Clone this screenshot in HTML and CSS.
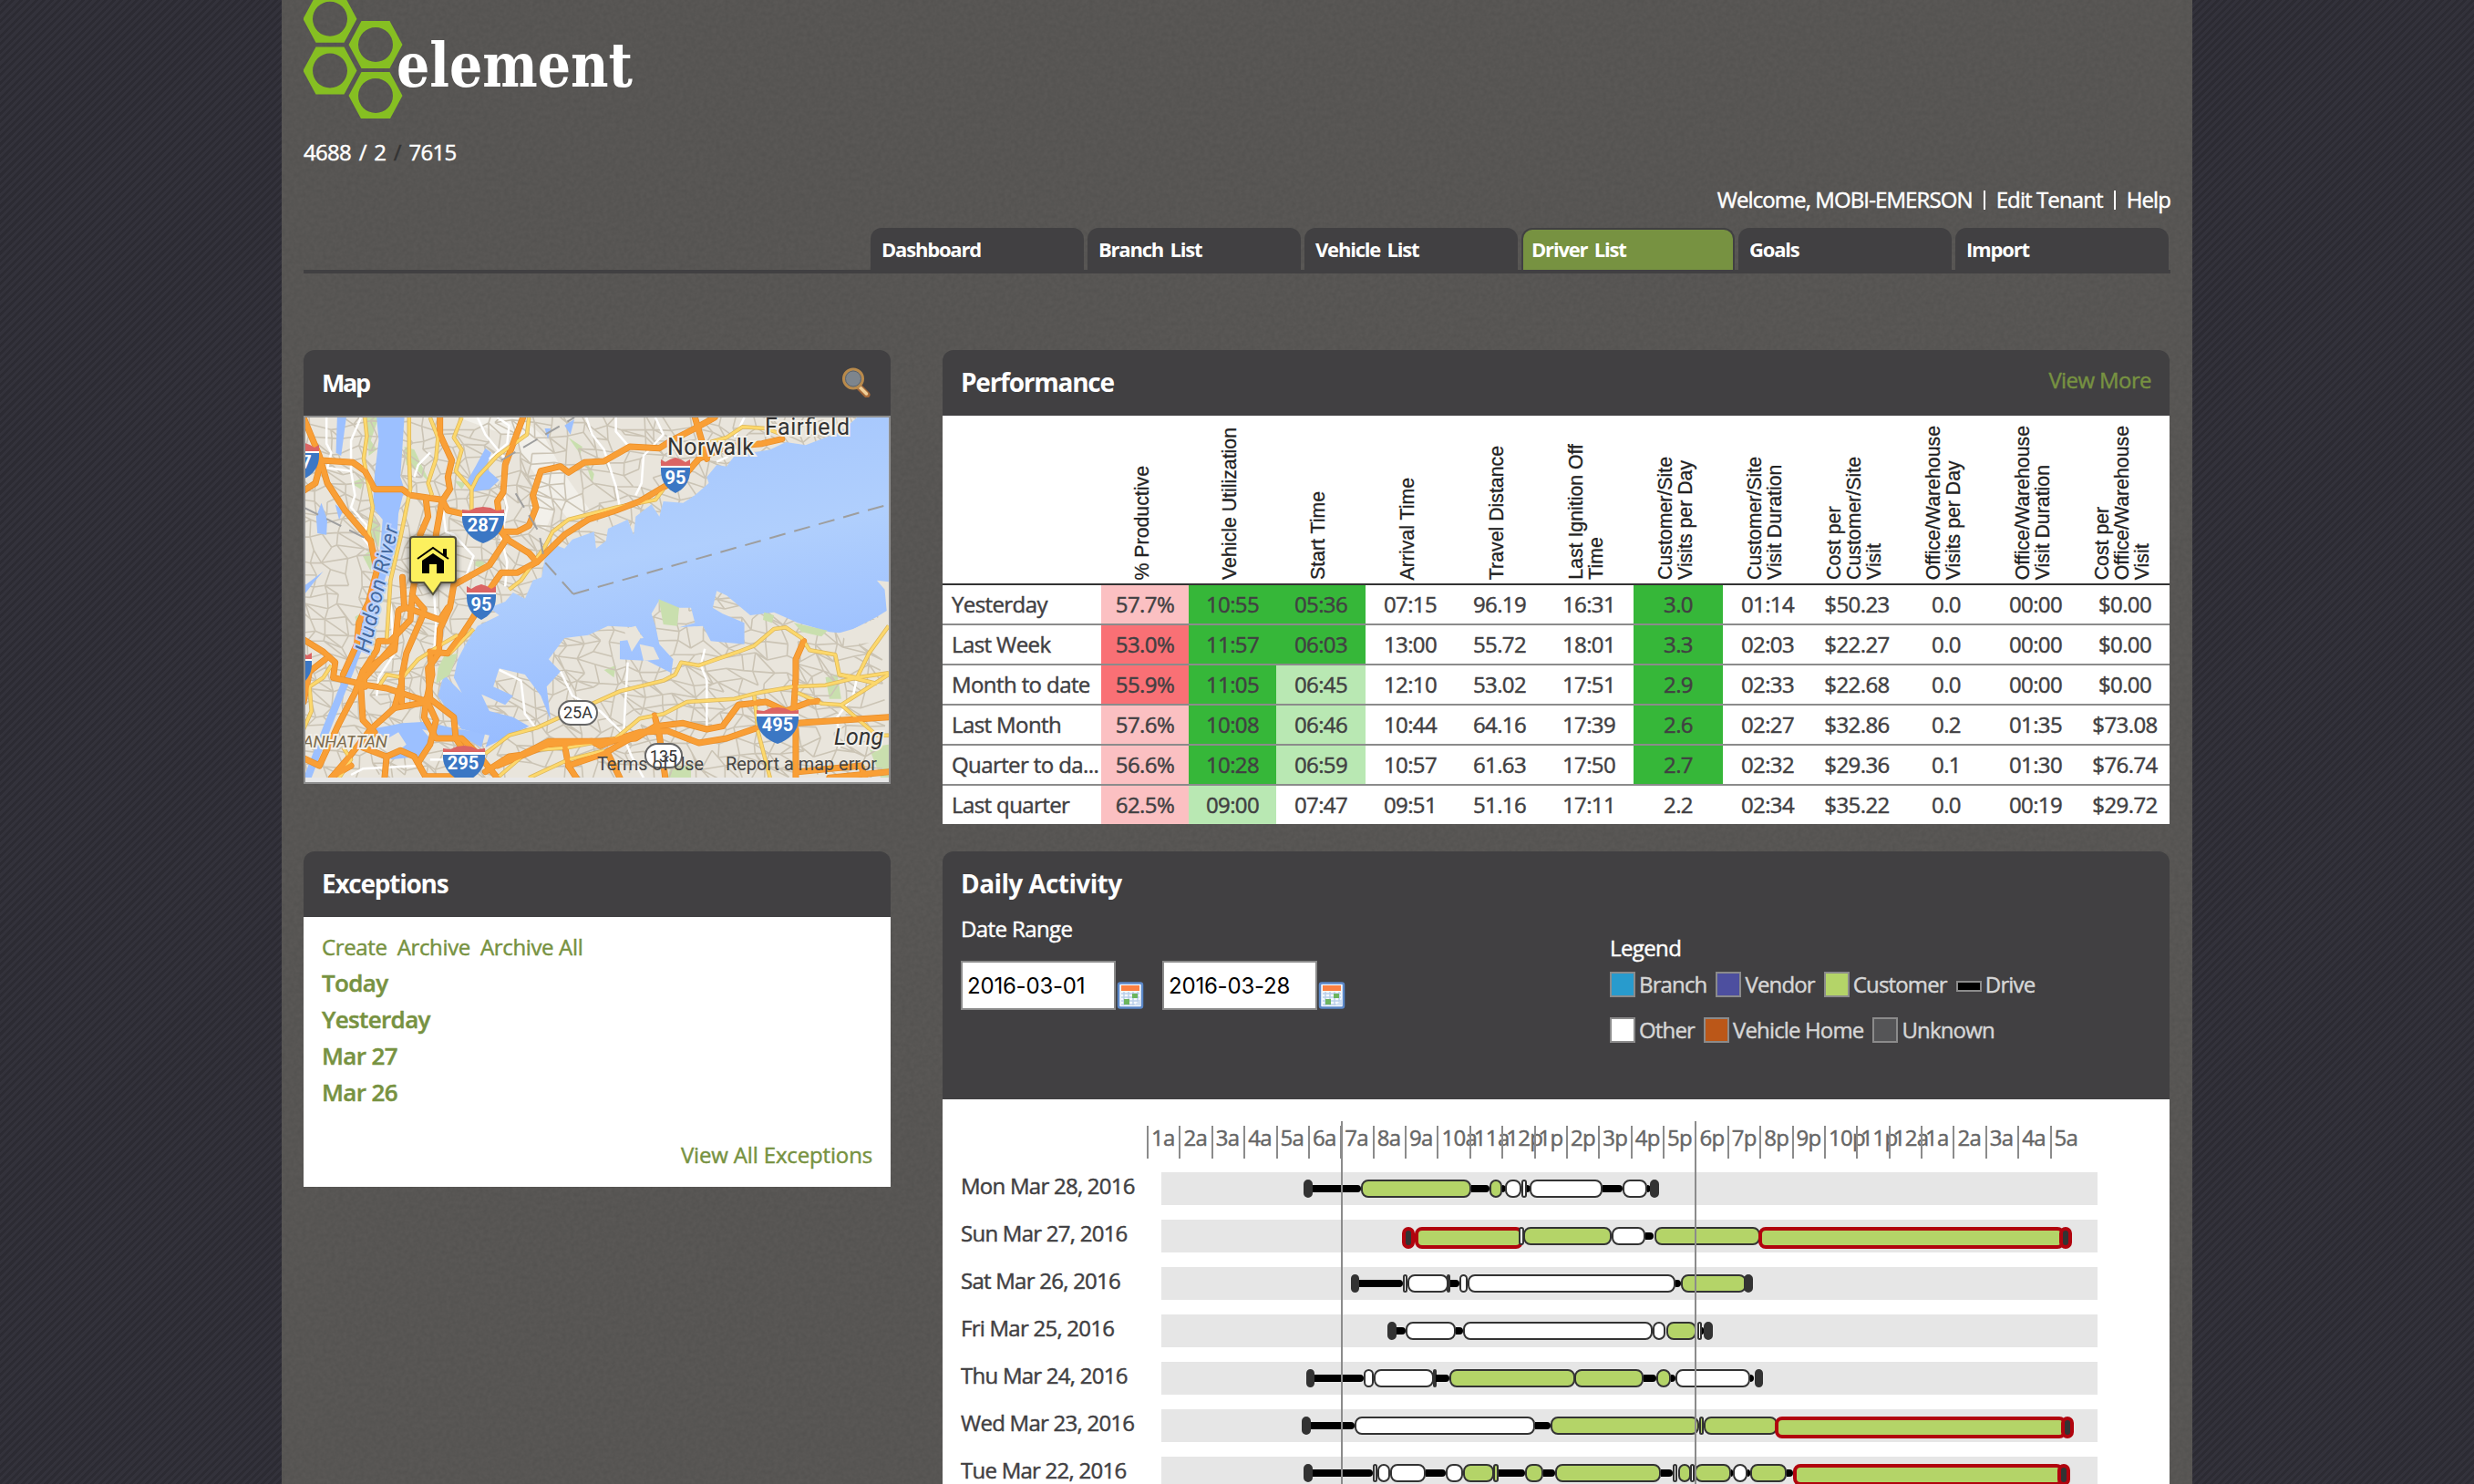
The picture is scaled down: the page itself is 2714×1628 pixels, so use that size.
FILE: index.html
```html
<!DOCTYPE html>
<html lang="en">
<head>
<meta charset="utf-8">
<title>Driver List</title>
<link rel="stylesheet" href="styles.css">
</head>
<body>
<div class="page">
  <header>
    <svg class="logo" viewBox="0 0 370 130" width="370" height="130" role="img" aria-label="element">
      <defs><path id="hex" fill-rule="evenodd" d="M-29.500 0L-15.500-26H15.500L29.500 0L15.500 26H-15.500ZM-19 0A19 19 0 1 0 19 0A19 19 0 1 0-19 0Z"/></defs>
      <g fill="#86bf22"><use href="#hex" x="29" y="20.7"/><use href="#hex" x="79" y="49"/><use href="#hex" x="29" y="77.5"/><use href="#hex" x="79" y="105"/></g>
      <text class="logo-text" x="102" y="95" textLength="259" lengthAdjust="spacingAndGlyphs">element</text>
    </svg>
    <div class="crumbs">4688 / 2 <i>/</i> 7615</div>
    <div class="user">Welcome, MOBI-EMERSON<b></b>Edit Tenant<b></b>Help</div>
    <nav>
      <a>Dashboard</a><a>Branch List</a><a>Vehicle List</a><a class="active">Driver List</a><a>Goals</a><a>Import</a>
    </nav>
  </header>
  <main>
    <section class="panel">
      <div class="head"><h2 class="narrow">Map</h2>
        <svg class="glass" width="31" height="33" viewBox="0 0 31 33"><path d="M19 22L27 30" stroke="#a5693a" stroke-width="7" stroke-linecap="round"/><path d="M19.500 22L26.500 29" stroke="#f0cf98" stroke-width="3.500" stroke-linecap="round"/><circle cx="12" cy="12.500" r="10.500" fill="#7d858d" stroke="#b98a4b" stroke-width="3"/><circle cx="12" cy="12.500" r="8.500" fill="none" stroke="#5d6369" stroke-width="1"/></svg>
      </div>
      <div class="map">
        <svg viewBox="0 0 640 395" width="640" height="395" id="map">
          <defs>
            <linearGradient id="sea" x1="0" y1="0" x2=".25" y2="1"><stop offset="0" stop-color="#a2c4fd"/><stop offset=".5" stop-color="#b0cffd"/><stop offset="1" stop-color="#96bbff"/></linearGradient>
            <g id="shield"><path d="M-16-12H16V-6C16 8 8 15 0 19C-8 15-16 8-16-6Z" fill="#3b77c4"/><path d="M-16-9H16V-18L11-15L6-18L0-20L-6-18L-11-15L-16-18Z" fill="#db6464"/><path d="M-16-11H16V-9H-16Z" fill="#fff"/></g>
            <g id="shield3"><path d="M-23-12H23V-6C22 7 12 16 0 20C-12 16-22 7-23-6Z" fill="#3b77c4"/><path d="M-23-11H23V-17L15-16L8-19L0-20L-8-19L-15-16L-23-17Z" fill="#db6464"/><path d="M-23-13H23V-10H-23Z" fill="#fff"/></g>
          </defs>
          <rect width="640" height="395" fill="#e9e5dc"/>
          <g class="geo" transform="translate(-15 -88) scale(.4337 .33333)">
            <path fill="#f2f0ea" d="M420 264H580L640 330L690 450L760 580L700 600L640 500L600 420L560 330ZM620 400L680 520L640 640L600 600Z"/>
            <g fill="#c9dfae"><path d="M190 264H220L200 340L215 370L195 390Z"/><path d="M285 360L310 370L350 480L320 440L290 420Z"/><path d="M150 480L185 460L175 500Z"/><path d="M205 590L225 620L220 690L190 640Z"/><path d="M410 470L440 480L430 500Z"/><path d="M740 400L765 450L760 480Z"/><path d="M160 920L185 900L200 960L170 970Z"/><path d="M700 330L735 360L730 385Z"/><path d="M470 730L490 740L480 760L460 750Z"/><path d="M790 1095L820 1080L815 1120Z"/><path d="M1350 1120L1380 1110L1390 1190L1360 1190Z"/><path d="M1460 1350L1510 1340V1450H1490Z"/><path d="M960 1410H1010V1450H950Z"/><path d="M180 720L210 690L200 770Z"/></g>
            <g id="streets" class="minor"></g>
            <g fill="#9cc0ff"><path d="M215 264H285L275 460L285 500L270 580L265 680L230 820L200 950L160 1090L110 1250L50 1450H30L80 1280L140 1090L180 930L220 760L230 600L205 560L210 450L220 340Z"/>
            <path d="M115 264H138L125 390L112 380Z"/><path d="M62 590L75 545L90 600L88 650L65 645Z"/><path d="M30 820L80 770L60 800L30 850Z"/><path d="M445 470L465 425L490 365L505 380L490 430L525 470L500 500L450 510Z"/><path d="M640 300L655 300L648 335Z"/><path d="M690 290L715 270L705 320Z"/><path d="M200 1290L280 1270L340 1265L420 1290L490 1300L480 1350L440 1320L360 1330L320 1380L250 1390L260 1330Z"/><path d="M110 550L130 570L120 600Z"/></g>
            <path fill="url(#sea)" d="M1510 264H1430L1390 310L1350 330L1300 355L1250 345L1210 370L1120 390L1100 425L1075 420L1050 460L1055 480L1020 520L990 545L940 540L930 590L910 550L870 590L865 650L850 600L800 630L795 670L770 695L765 640L710 665L690 695L660 680L640 730L632 790L610 800L590 860L560 840L540 870L500 890L525 915L470 950L440 1010L420 1060L410 1120L430 1170L385 1110L370 1180L400 1240L430 1290L500 1310L490 1350L600 1280L560 1250L500 1230L480 1175L540 1210L560 1180L510 1150L525 1090L590 1110L630 1180L655 1260L645 1150L680 1100L650 1060L690 990L750 980L800 950L870 955L890 990L830 1000L830 1060L900 1065L960 1105L965 1060L930 1010L920 950L910 910L930 865L970 890L1010 890L1020 940L980 955L1040 950L1060 1000L1145 1010L1145 940L1090 910L1065 890L1075 835L1100 850L1160 915L1220 905L1280 940L1360 970L1400 975L1480 920L1505 900L1500 830L1480 800L1510 805Z"/>
            <path fill="#e9e5dc" d="M840 960L870 950L885 985L860 1035L850 1000ZM880 1010L915 1020L930 1060L890 1065ZM1380 975L1420 960L1480 925L1510 900V1000L1420 1010ZM230 1330L270 1300L290 1340L260 1370ZM330 1290L360 1300L350 1320Z"/>
            <g fill="#c9dfae"><path d="M928 862L980 890L975 950L940 945Z"/><path d="M1195 905L1220 915L1215 940L1192 930Z"/><path d="M1270 940L1355 965L1340 985L1290 970Z"/><path d="M385 1050L420 1040L400 1110L365 1140L370 1090Z"/></g>
            <g class="white"><path d="M88 264V350L100 380L90 430L150 440L160 520L150 560L190 620L180 660L205 700"/><path d="M175 264L150 340V440"/><path d="M350 380L320 420L310 460"/><path d="M470 264L490 320L540 400L530 480L545 560L530 660L545 740L540 820"/><path d="M520 264L550 290L545 350L500 400"/><path d="M745 264L760 320L790 370L820 490L830 560"/><path d="M820 264V310L860 370"/><path d="M920 264L940 320L890 390L885 480L870 520"/><path d="M380 540L390 640L410 650L460 720L440 790"/><path d="M360 840L365 940L360 1040"/><path d="M250 880L260 1040L220 1120L215 1180"/><path d="M525 1095L580 1130L590 1240L620 1290"/><path d="M680 1100L710 1180L780 1230L835 1300L860 1380L890 1450"/><path d="M850 1070L845 1180L840 1300"/><path d="M1045 1025L1035 1080L1050 1130V1290"/><path d="M1430 1120L1420 1180L1380 1250L1385 1350"/><path d="M1075 410L1100 395L1150 340"/><path d="M150 1440L180 1420L320 1410"/><path d="M350 1390H420"/><path d="M1145 264L1120 330"/></g>
            <g id="majors"><g class="yellow" id="yellow"><path d="M185 264L190 325L182 400L205 560L195 640L205 700"/><path d="M297 264V400L300 500L275 660L250 800L240 1000"/><path d="M350 264L370 330L365 400L345 480L355 520"/><path d="M430 264L410 330L430 370L415 440L455 500V570"/><path d="M600 264L595 320L520 390L470 460L455 500"/><path d="M1240 320L1200 300L1140 295L1100 330L1060 345"/><path d="M940 500L920 535L820 560L700 600L660 640L640 690L580 800L550 830"/><path d="M1510 950L1460 1040L1430 1120L1385 1110L1375 1045L1310 1030L1290 990L1250 955L1220 960L1170 1015L1130 1035L1030 1080L985 1070L970 1110L940 1130L830 1165L770 1200L680 1250L620 1285L550 1310L490 1370"/><path d="M1510 1105L1430 1120L1350 1145L1270 1150L1180 1170L1120 1190L1000 1200L940 1240L880 1255L820 1320L700 1350L600 1360L520 1450"/><path d="M1510 1110L1390 1210L1340 1205L1280 1170"/><path d="M1170 1180L1180 1300L1210 1450"/><path d="M1385 1110L1480 1140"/><path d="M420 980L380 1010L320 1060L280 1120L240 1110L220 1150"/><path d="M30 1290L50 1230L45 1150L80 1120L100 1080"/><path d="M120 1450L150 1390L130 1350"/><path d="M460 960L400 1040"/><path d="M1510 1310L1480 1310L1390 1210"/><path d="M600 1450L700 1390L790 1360"/></g>
            <g class="orange" id="orange"><path d="M30 264L70 390L90 480L135 570L200 670L215 770L195 870L170 940L165 1010L130 1110"/><path d="M30 505L60 480L75 405L155 412L185 440L210 500H280L300 520L380 535L395 570L430 580H500"/><path d="M375 264V320L405 405L395 460L400 500L380 540L365 650"/><path d="M340 540L345 590L325 650L315 760L305 850L335 895L330 920L290 1040L278 1120V1200"/><path d="M585 264L560 350L540 420L535 510L520 540L530 640L545 665L600 710L620 740L690 650L750 600L820 570L880 540L945 490L990 460L1030 400L1100 360L1190 350L1240 335"/><path d="M530 640H570L600 620L618 560L610 520L630 440L680 425L700 445L740 412L790 408L855 360L930 365L960 340L1020 300L1070 264"/><path d="M1020 264L1035 330L1050 400"/><path d="M545 660L500 750L410 815L400 890L375 960L372 1040L345 1090L350 1190L410 1250L415 1320L440 1370"/><path d="M620 740L570 775H530L495 840L460 920L430 980L395 1040L350 1035L355 1110L340 1200L335 1250L365 1320H430L470 1370L520 1450"/><path d="M280 790L285 890L270 900L260 1030L180 1100L185 1150"/><path d="M275 895L290 890L375 930L395 890"/><path d="M305 850L300 930L250 1000H220L215 1030L180 1100L160 1170L120 1270L70 1410L30 1385"/><path d="M30 995L80 1035L110 1070L105 1120L190 1145L240 1155L345 1200L260 1220L200 1290L140 1390L100 1450"/><path d="M30 1200L45 1100L85 1060"/><path d="M185 1120L260 1010"/><path d="M175 1150L180 1260L210 1300L180 1350L240 1380L275 1360L310 1380L340 1450"/><path d="M240 1380L235 1450"/><path d="M260 1220L275 1150"/><path d="M340 1190L365 1260L350 1340L320 1400"/><path d="M490 1430L550 1380L580 1375L650 1330H780L870 1320L920 1280L990 1270L1050 1290L1090 1280L1130 1210L1200 1200L1250 1230L1310 1200L1330 1198"/><path d="M520 1410L650 1340L760 1330L780 1345L830 1320L880 1300L950 1295L1030 1335L1100 1320L1190 1280L1280 1270L1510 1250"/><path d="M690 1340L700 1410L790 1370L870 1310"/><path d="M918 1245L930 1310L945 1450"/><path d="M700 1410L720 1450M800 1370L830 1450"/><path d="M1295 1000L1275 1060V1120L1270 1220L1255 1240"/><path d="M1275 1290V1450M1280 1430L1440 1410L1450 1450M1360 1450L1510 1430"/><path d="M110 1440L150 1410"/><path d="M340 1445H450"/></g></g>
            <g class="border"><path d="M712 845L1510 550"/><path d="M712 845L640 740L625 640L560 500"/><path d="M530 405L715 264"/><path d="M30 560L185 660"/></g>
          </g>
          <g class="map-labels">
            <text x="504" y="19" textLength="93">Fairfield</text><text x="397" y="41" textLength="95">Norwalk</text>
            <text class="it" x="580" y="359" textLength="54">Long</text>
            <text class="hood" x="-3" y="362" textLength="93">ANHATTAN</text>
            <text class="river" transform="translate(70 259) rotate(-77)" textLength="142">Hudson River</text>
          </g>
          <use href="#shield3" x="195" y="118"/><use href="#shield" x="406" y="64"/><use href="#shield" x="193" y="203"/><use href="#shield3" x="518" y="338"/><use href="#shield3" x="174" y="380"/><use href="#shield" x="-1" y="48"/><use href="#shield" x="-9" y="276"/>
          <g class="nums"><text x="195" y="125">287</text><text x="406" y="73">95</text><text x="193" y="212">95</text><text x="518" y="344">495</text><text x="173" y="386">295</text><text x="1" y="56">7</text></g>
          <g class="routes"><rect x="278" y="311" width="42" height="26" rx="13"/><rect x="373" y="358" width="40" height="26" rx="13"/><text x="299" y="330">25A</text><text x="393" y="378">135</text></g>
          <g class="credit"><text x="320" y="387" textLength="117" lengthAdjust="spacingAndGlyphs">Terms of Use</text><text x="461" y="387" textLength="166" lengthAdjust="spacingAndGlyphs">Report a map error</text></g>
          <g class="pin" transform="translate(-2 0)"><path d="M117 134Q117 131 120 131H164Q167 131 167 134V178Q167 181 164 181H151L142 194L132 181H120Q117 181 117 178Z" fill="#fcf05e" stroke="#55523c" stroke-width="2"/><path d="M125 155L142 143L159 155" fill="none" stroke="#000" stroke-width="2"/><path d="M153 144H157V153L153 150ZM130 157L142 149L154 157V171H146V161H138V171H130Z"/></g>
        </svg>
      </div>
    </section>
    <section class="panel">
      <div class="head"><h2>Performance</h2><a class="more">View More</a></div>
      <table class="perf">
        <colgroup><col class="c0"><col class="c1"><col class="c1"><col><col><col><col><col><col><col><col><col></colgroup>
        <thead><tr><th></th><th><span>% Productive</span></th><th><span>Vehicle Utilization</span></th><th><span>Start Time</span></th><th><span>Arrival Time</span></th><th><span>Travel Distance</span></th><th><span>Last Ignition Off<br>Time</span></th><th><span>Customer/Site<br>Visits per Day</span></th><th><span>Customer/Site<br>Visit Duration</span></th><th><span>Cost per<br>Customer/Site<br>Visit</span></th><th><span>Office/Warehouse<br>Visits per Day</span></th><th><span>Office/Warehouse<br>Visit Duration</span></th><th><span>Cost per<br>Office/Warehouse<br>Visit</span></th></tr></thead>
        <tbody>
        <tr><td>Yesterday</td><td class="r1">57.7%</td><td class="g2">10:55</td><td class="g2">05:36</td><td>07:15</td><td>96.19</td><td>16:31</td><td class="g2">3.0</td><td>01:14</td><td>$50.23</td><td>0.0</td><td>00:00</td><td>$0.00</td></tr>
        <tr><td>Last Week</td><td class="r2">53.0%</td><td class="g2">11:57</td><td class="g2">06:03</td><td>13:00</td><td>55.72</td><td>18:01</td><td class="g2">3.3</td><td>02:03</td><td>$22.27</td><td>0.0</td><td>00:00</td><td>$0.00</td></tr>
        <tr><td>Month to date</td><td class="r2">55.9%</td><td class="g2">11:05</td><td class="g1">06:45</td><td>12:10</td><td>53.02</td><td>17:51</td><td class="g2">2.9</td><td>02:33</td><td>$22.68</td><td>0.0</td><td>00:00</td><td>$0.00</td></tr>
        <tr><td>Last Month</td><td class="r1">57.6%</td><td class="g2">10:08</td><td class="g1">06:46</td><td>10:44</td><td>64.16</td><td>17:39</td><td class="g2">2.6</td><td>02:27</td><td>$32.86</td><td>0.2</td><td>01:35</td><td>$73.08</td></tr>
        <tr><td>Quarter to da...</td><td class="r1">56.6%</td><td class="g2">10:28</td><td class="g1">06:59</td><td>10:57</td><td>61.63</td><td>17:50</td><td class="g2">2.7</td><td>02:32</td><td>$29.36</td><td>0.1</td><td>01:30</td><td>$76.74</td></tr>
        <tr><td>Last quarter</td><td class="r1">62.5%</td><td class="g1">09:00</td><td>07:47</td><td>09:51</td><td>51.16</td><td>17:11</td><td>2.2</td><td>02:34</td><td>$35.22</td><td>0.0</td><td>00:19</td><td>$29.72</td></tr>
        </tbody>
      </table>
    </section>
    <section class="panel">
      <div class="head"><h2>Exceptions</h2></div>
      <div class="exceptions">
        <div class="actions"><a>Create</a><a>Archive</a><a>Archive All</a></div>
        <ul><li>Today</li><li>Yesterday</li><li>Mar 27</li><li>Mar 26</li></ul>
        <a class="all">View All Exceptions</a>
      </div>
    </section>
    <section class="panel">
      <div class="head daily-head">
        <div class="range">
          <h2 class="wide">Daily Activity</h2>
          <label>Date Range</label>
          <div class="dates">
            <span class="date">2016-03-01</span><svg class="cal" width="30" height="30" viewBox="0 0 30 30"><use href="#cal"/></svg>
            <span class="date">2016-03-28</span><svg class="cal" width="30" height="30" viewBox="0 0 30 30">
              <defs><g id="cal"><rect x="2" y="1.500" width="26" height="27" rx="2" fill="#f4f8fd" stroke="#5a87c8" stroke-width="2.500"/><rect x="5" y="4" width="20" height="6" fill="#fb8042"/><path d="M5 13H25M5 17H25M5 21H25M5 25H20M8 11V26M13 11V26M18 11V26M23 11V22" stroke="#b9cfea" stroke-width="1.500"/><path d="M8 19H14V25H8ZM17 13H23V18H17Z" fill="#6cb55e"/><path d="M19 26L26 19V26Z" fill="#cfdff2"/></g></defs><use href="#cal"/></svg>
          </div>
        </div>
        <div class="legend">
          <strong>Legend</strong>
          <div><span class="k branch"></span>Branch<span class="k vendor"></span>Vendor<span class="k customer"></span>Customer<span class="k drive"></span>Drive</div>
          <div><span class="k other"></span>Other<span class="k home"></span>Vehicle Home<span class="k unknown"></span>Unknown</div>
        </div>
      </div>
      <div class="chart">
        <div class="hours" id="hours"></div>
        <div id="days"></div>
        <div class="shift start"></div><div class="shift end"></div>
      </div>
    </section>
  </main>
</div>
<script src="app.js"></script>
</body>
</html>
```
FILE: styles.css
```css
* { box-sizing: border-box; margin: 0; padding: 0; }
html, body { height: 1628px; overflow: hidden; }
body {
  font: 24px "Open Sans", "Noto Sans", sans-serif;
  letter-spacing: -0.6px;
  color: #414042;
  -webkit-text-stroke: .45px currentColor;
  background: repeating-linear-gradient(135deg, #33323b 0 3px, #2c2b33 3px 6px);
}
svg, .date, .perf th { -webkit-text-stroke: 0; }
.page {
  width: 2096px; height: 1628px; margin-left: 309px; padding: 0 24px; overflow: hidden;
  background-color: #5a5856;
  background-image: url("data:image/svg+xml,%3Csvg xmlns='http://www.w3.org/2000/svg' width='400' height='400'%3E%3Cfilter id='n'%3E%3CfeTurbulence type='fractalNoise' baseFrequency='.22' numOctaves='2' stitchTiles='stitch'/%3E%3CfeColorMatrix values='0 0 0 0 0 0 0 0 0 0 0 0 0 0 0 .35 0 0 0 -.08'/%3E%3C/filter%3E%3Crect width='400' height='400' filter='url(%23n)' opacity='.3'/%3E%3C/svg%3E");
}
.logo { display: block; }
.logo-text { font: bold 67px "DejaVu Serif", serif; letter-spacing: 0; fill: #fff; }
.crumbs { margin-top: 25px; line-height: 24px; color: #fff; letter-spacing: -0.7px; word-spacing: 3px; }
.crumbs i { color: #333; font-style: normal; }
.user { display: flex; justify-content: flex-end; align-items: center; margin-top: 28px; line-height: 24px; color: #fff; letter-spacing: -0.9px; }
.user b { width: 2px; height: 21px; margin: 0 12px; background: #fff; }
nav { display: flex; justify-content: flex-end; gap: 4px; margin-top: 19px; height: 50px; padding-right: 2px; border-bottom: 4px solid #414042; }
nav a { width: 234px; padding-left: 12px; border-radius: 12px 12px 0 0; background: #414042; color: #fff; font-size: 22px; font-weight: 700; line-height: 46px; letter-spacing: -1.2px; word-spacing: 3px; -webkit-text-stroke: 0; }
nav .active { padding-left: 9px; border: 2px solid #414042; border-bottom: 0; background: #779241; line-height: 42px; }
main { display: grid; grid-template-columns: 644px 1346px; grid-template-rows: 520px auto; gap: 30px 57px; align-items: start; margin-top: 84px; }
.panel { min-width: 0; }
.head { display: flex; justify-content: space-between; height: 72px; padding: 0 20px; border-radius: 12px 12px 0 0; background: #414042; }
h2 { color: #fff; font-size: 28px; font-weight: 700; line-height: 71px; letter-spacing: -1.25px; -webkit-text-stroke: 0; }
h2.narrow { letter-spacing: -2.4px; font-size: 27px; }
h2.wide { letter-spacing: -0.6px; }
.glass { margin: 19px 2px 0 0; }
.more { color: #779241; line-height: 65px; }
.map { height: 404px; border: 2px solid #8e8e8e; background: #e8e8e8; }
.map svg { display: block; overflow: hidden; letter-spacing: 0; }
.geo path { vector-effect: non-scaling-stroke; }
.minor path, .white path, .yellow path, .orange path, .border path { fill: none; stroke-linejoin: round; }
.minor path { stroke: #cbc4b5; stroke-width: 1.6px; }
.white path { stroke: #fff; stroke-width: 2.5px; }
.yellow path { stroke: #fcd86c; stroke-width: 3px; }
.orange path { stroke: #f99f36; stroke-width: 5.5px; stroke-linecap: round; }
.casing.yellow path { stroke: #dcb65a; stroke-width: 4.5px; }
.casing.orange path { stroke: #e98d28; stroke-width: 7px; }
.border path { stroke: #9e9e9e; stroke-width: 2px; stroke-dasharray: 18 10; }
.map-labels text { font: 25px Roboto, sans-serif; fill: #333; stroke: #f2efe8; stroke-width: 4px; paint-order: stroke; }
.map-labels .it { font-style: italic; }
.map-labels .hood { font: italic 19px Roboto, sans-serif; fill: #7d6c4e; }
.map-labels .river { font: italic 23px Roboto, sans-serif; fill: #44699f; stroke: #bcd3fb; }
.nums text { font: bold 20px Roboto, sans-serif; fill: #fff; text-anchor: middle; }
.routes rect { fill: #fff; stroke: #666; stroke-width: 2px; }
.routes text { font: 18px Roboto, sans-serif; fill: #333; text-anchor: middle; }
.credit text { font: 20px Roboto, sans-serif; fill: #444; }
.pin { filter: drop-shadow(0 1px 3px rgba(0, 0, 0, .6)); }
.perf { width: 1346px; table-layout: fixed; border-collapse: separate; border-spacing: 0; background: #fff; }
.perf .c0 { width: 174px; }
.perf .c1 { width: 96px; }
.perf th { height: 186px; padding: 0 0 4px; border-bottom: 2px solid #333; vertical-align: bottom; font: 21.3px/22px "Liberation Sans", Arial, sans-serif; letter-spacing: 0; color: #222; }
.perf th span { display: block; margin: 0 auto; writing-mode: vertical-rl; transform: rotate(180deg) translateX(3.500px); text-align: left; white-space: nowrap; -webkit-text-stroke: .3px #222; }
.perf td { height: 44px; border-bottom: 2px solid #8b8b8b; line-height: 42px; text-align: center; white-space: nowrap; }
.perf tr:last-child td { height: 42px; border-bottom: 0; }
.perf td:first-child { padding-left: 10px; text-align: left; }
.perf .r1 { background: #fbc0c2; }
.perf .r2 { background: #f97075; }
.perf .g1 { background: #b9e8b3; }
.perf .g2 { background: #36b739; }
.exceptions { height: 296px; padding: 20px; background: #fff; color: #779241; }
.actions { display: flex; gap: 11px; line-height: 26px; margin-bottom: 6px; letter-spacing: -0.35px; }
.exceptions ul { list-style: none; font-size: 26px; font-weight: 600; line-height: 40px; letter-spacing: -0.65px; }
.all { display: block; margin-top: 35px; line-height: 28px; text-align: right; letter-spacing: -0.15px; }
.daily-head { height: 272px; }
.range label { display: block; margin-top: 2px; line-height: 24px; color: #fff; }
.dates { display: flex; align-items: flex-end; margin-top: 23px; }
.date { width: 170px; height: 54px; padding-left: 5px; border: 2px solid #8b8b8b; background: #fff; color: #000; font: 24px/51px Inter, sans-serif; letter-spacing: -0.2px; }
.cal { margin: 0 20px 1px 1px; }
.legend { width: 594px; margin-top: 92px; color: #d6d6d6; letter-spacing: -0.85px; }
.legend strong { display: block; line-height: 27px; color: #fff; font-weight: 400; letter-spacing: -0.6px; }
.legend div { display: flex; align-items: center; height: 28px; margin-top: 13px; line-height: 24px; }
.legend div + div { margin-top: 22px; }
.k { width: 28px; height: 28px; margin-right: 4px; border: 2px solid #8b8b8b; }
.k:not(:first-child) { margin-left: 10px; }
.branch { background: #289bcd; }
.vendor { background: #4d4f9f; }
.customer { background: #b4d468; }
.drive { height: 12px; margin-top: 4px; background: #000; }
.other { background: #fff; }
.home { background: #bb5718; }
.unknown { background: #555557; }
.chart { position: relative; height: 440px; padding: 29px 0 0 20px; background: #fff; }
.hours { display: flex; width: 1026px; margin: 0 0 15px 204px; height: 36px; }
.hours span { flex: 1 1 0; min-width: 0; padding-left: 3px; border-left: 2px solid #8b8b8b; line-height: 25px; color: #666; white-space: nowrap; }
.day { display: flex; height: 36px; margin-bottom: 16px; line-height: 30px; letter-spacing: -0.75px; }
.day time { width: 220px; }
.track { position: relative; width: 1027px; background: #e6e6e6; }
.seg { position: absolute; top: 8px; height: 20px; border: 2px solid #333; border-radius: 8px; background: #fff; }
.seg.c { background: #b4d468; }
.seg.k0 { background: #333; border-radius: 5px; }
.seg.d { top: 14px; height: 8px; border: 0; border-radius: 0 4px 4px 0; background: #000; }
.seg.r { height: 24px; border: 4px solid #b1040e; background: #b4d468; }
.seg.rk { height: 24px; border: 4px solid #b1040e; background: #333; }
.shift { position: absolute; top: 24px; bottom: 0; width: 2px; background: #8b8b8b; }
.start { left: 437px; }
.end { left: 825px; }
```
FILE: app.js
```js
const labels = [];
for (let h = 1; h <= 29; h++) {
  const n = h % 12 || 12;
  labels.push(n + (h % 24 < 12 ? 'a' : 'p'));
}
document.getElementById('hours').innerHTML = labels.map(t => `<span>${t}</span>`).join('');

// kind:start-end; k0 = trip end, d = drive, c = customer, w = other, r = flagged, rk = flagged end
const days = [
  ['Mon Mar 28, 2016', 'd:1440-1493 d:1614-1634 d:1648-1652 d:1675-1679 d:1758-1780 d:1807-1811 k0:1430-1440 c:1493-1614 c:1634-1648 w:1651-1669 w:1669-1675 w:1678-1758 w:1780-1807 k0:1810-1820'],
  ['Sun Mar 27, 2016', 'rk:1538-1552 r:1552-1671 w:1665.5-1671.5 c:1671-1768 w:1768-1805 d:1805-1814 c:1814.5-1931 r:1929-2265 rk:2259-2273'],
  ['Sat Mar 26, 2016', 'd:1491-1539 k0:1482-1491 w:1539-1544 w:1543.5-1589 k0:1587-1591 d:1591-1601 w:1601-1610 w:1610-1838 d:1838-1844 c:1844-1916 k0:1913-1923'],
  ['Fri Mar 25, 2016', 'd:1532-1542 k0:1522-1532 w:1542-1597 d:1597-1605 w:1605-1812.5 w:1813-1827 c:1827.5-1860.5 w:1862-1867 d:1867-1869 k0:1869-1879'],
  ['Thu Mar 24, 2016', 'd:1442-1496 k0:1433-1442 w:1496-1507 w:1507-1573 k0:1571.5-1575 d:1575-1590 c:1590-1727.5 c:1727-1803 d:1803-1817 c:1817-1833 d:1833-1838 w:1838-1920 d:1920-1924 k0:1925-1934'],
  ['Wed Mar 23, 2016', 'd:1438-1486 k0:1428-1438 w:1486-1684 d:1684-1701 c:1701-1864 c:1863.5-1869 c:1869-1949.5 r:1947-2267 rk:2261-2275'],
  ['Tue Mar 22, 2016', 'd:1440-1506 k0:1430-1440 w:1506-1511 w:1510.5-1524.5 w:1524.5-1564 d:1564-1586 w:1586-1605 c:1605-1638.5 c:1638-1644 d:1644-1673 c:1673-1693 d:1693-1706 c:1706-1822 d:1822-1835 w:1835-1840 c:1841-1855 w:1853.5-1858.5 c:1858.5-1899 d:1899-1901 w:1901-1917 d:1917-1920 c:1920-1960 d:1960-1967 r:1967-2264 rk:2257-2271'],
];
const origin = 1274;
document.getElementById('days').innerHTML = days.map(([name, segs]) => {
  const bars = segs.split(' ').map(s => {
    const [kind, range] = s.split(':');
    const [a, b] = range.split('-').map(Number);
    return `<i class="seg ${kind}" style="left:${a - origin}px;width:${b - a}px"></i>`;
  }).join('');
  return `<div class="day"><time>${name}</time><div class="track">${bars}</div></div>`;
}).join('');

// local street mesh under the main roads
let seed = 7;
const rnd = () => (seed = (seed * 16807) % 2147483647) / 2147483647;
const step = 40, cols = 38, rows = 31, pts = [];
for (let y = 0; y < rows; y++) {
  pts.push([]);
  for (let x = 0; x < cols; x++) pts[y].push([(x * step + 10 + (rnd() - .5) * 32).toFixed(0), (y * step + 250 + (rnd() - .5) * 36).toFixed(0)]);
}
let d = '';
for (let y = 0; y < rows - 1; y++) for (let x = 0; x < cols - 1; x++) {
  const p = pts[y][x];
  if (rnd() < .82) d += `M${p}L${pts[y][x + 1]}`;
  if (rnd() < .82) d += `M${p}L${pts[y + 1][x]}`;
  if (rnd() < .35) d += `M${p}L${pts[y + 1][x + 1]}`;
}
const path = document.createElementNS('http://www.w3.org/2000/svg', 'path');
path.setAttribute('d', d);
document.getElementById('streets').appendChild(path);

// darker casing beneath the coloured roads
const majors = document.getElementById('majors');
['orange', 'yellow'].forEach(id => {
  const copy = document.getElementById(id).cloneNode(true);
  copy.removeAttribute('id');
  copy.classList.add('casing');
  majors.prepend(copy);
});
```
